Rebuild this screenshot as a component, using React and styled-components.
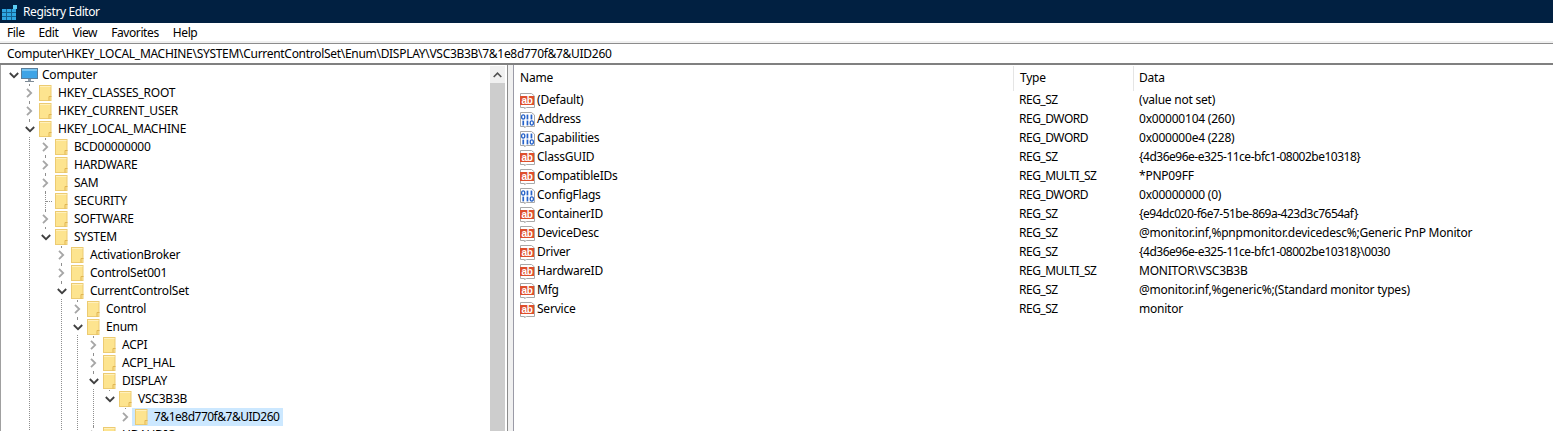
import styled, { createGlobalStyle } from "styled-components";

const ADDRESS =
  "Computer\\HKEY_LOCAL_MACHINE\\SYSTEM\\CurrentControlSet\\Enum\\DISPLAY\\VSC3B3B\\7&1e8d770f&7&UID260";

const MENUS = ["File", "Edit", "View", "Favorites", "Help"];

const leaf = (name) => ({ name });
const closed = (name) => ({ name, closed: true });

// more: the key has further siblings below the visible part of the tree
const TREE = {
  name: "Computer",
  computer: true,
  children: [
    closed("HKEY_CLASSES_ROOT"),
    closed("HKEY_CURRENT_USER"),
    {
      name: "HKEY_LOCAL_MACHINE",
      more: true,
      children: [
        closed("BCD00000000"),
        closed("HARDWARE"),
        closed("SAM"),
        leaf("SECURITY"),
        closed("SOFTWARE"),
        {
          name: "SYSTEM",
          children: [
            closed("ActivationBroker"),
            closed("ControlSet001"),
            {
              name: "CurrentControlSet",
              more: true,
              children: [
                closed("Control"),
                {
                  name: "Enum",
                  more: true,
                  children: [
                    closed("ACPI"),
                    closed("ACPI_HAL"),
                    {
                      name: "DISPLAY",
                      children: [
                        {
                          name: "VSC3B3B",
                          children: [
                            { name: "7&1e8d770f&7&UID260", closed: true, selected: true },
                          ],
                        },
                      ],
                    },
                    { name: "HDAUDIO", closed: true, more: true },
                  ],
                },
              ],
            },
          ],
        },
      ],
    },
  ],
};

const VALUES = [
  ["(Default)", "REG_SZ", "(value not set)"],
  ["Address", "REG_DWORD", "0x00000104 (260)"],
  ["Capabilities", "REG_DWORD", "0x000000e4 (228)"],
  ["ClassGUID", "REG_SZ", "{4d36e96e-e325-11ce-bfc1-08002be10318}"],
  ["CompatibleIDs", "REG_MULTI_SZ", "*PNP09FF"],
  ["ConfigFlags", "REG_DWORD", "0x00000000 (0)"],
  ["ContainerID", "REG_SZ", "{e94dc020-f6e7-51be-869a-423d3c7654af}"],
  ["DeviceDesc", "REG_SZ", "@monitor.inf,%pnpmonitor.devicedesc%;Generic PnP Monitor"],
  ["Driver", "REG_SZ", "{4d36e96e-e325-11ce-bfc1-08002be10318}\\0030"],
  ["HardwareID", "REG_MULTI_SZ", "MONITOR\\VSC3B3B"],
  ["Mfg", "REG_SZ", "@monitor.inf,%generic%;(Standard monitor types)"],
  ["Service", "REG_SZ", "monitor"],
];

function AppIcon() {
  const cells = [];
  for (let y = 0; y < 3; y++) {
    for (let x = 0; x < 3; x++) {
      cells.push(<rect key={`${x}-${y}`} x={2 + x * 5} y={7 + y * 4} width="4" height="3" />);
    }
  }
  return (
    <TitleIconSvg width="18" height="20" viewBox="0 0 18 20">
      <rect x="2" y="7" width="14" height="11" fill="#14608f" />
      <g fill="#2ea6e2">{cells}</g>
      <rect x="13" y="3" width="4" height="4" fill="#5ccdf2" />
    </TitleIconSvg>
  );
}

function ComputerIcon() {
  return (
    <svg width="18" height="15" viewBox="0 0 18 15">
      <rect x="0.5" y="0.5" width="16" height="10" fill="#3fa4e6" stroke="#5a7f9c" />
      <rect x="1" y="1" width="15" height="2" fill="#79c5f2" />
      <rect x="7" y="11" width="3" height="2" fill="#8f9ba6" />
      <rect x="4" y="13" width="9" height="1" fill="#7d8a96" />
    </svg>
  );
}

function FolderIcon() {
  return (
    <svg width="13" height="16" viewBox="0 0 13 16">
      <rect x="0.5" y="0.5" width="11.5" height="15" fill="#fde48f" stroke="#eccb72" />
      <rect x="1" y="1" width="10.5" height="1" fill="#fff0bd" />
      <path d="M10 15.5v-4h2.5" fill="none" stroke="#e0b552" />
    </svg>
  );
}

function Chevron({ open, leaf: isLeaf }) {
  if (isLeaf) return <ChevronSlot $leaf />;
  return (
    <ChevronSlot>
      {open ? (
        <svg width="10" height="7" viewBox="0 0 10 7">
          <path d="M0.8 1l4.2 4.2L9.2 1" fill="none" stroke="#404040" strokeWidth="1.8" />
        </svg>
      ) : (
        <svg width="7" height="10" viewBox="0 0 7 10">
          <path d="M1 0.8l4.2 4.2L1 9.2" fill="none" stroke="#a6a6a6" strokeWidth="1.8" />
        </svg>
      )}
    </ChevronSlot>
  );
}

function TreeNode({ node }) {
  const hasKids = !!node.children;
  return (
    <TreeItem $root={node.computer} $more={node.more}>
      <TreeRow>
        <Chevron open={hasKids} leaf={!hasKids && !node.closed} />
        <Entry $selected={node.selected} $computer={node.computer}>
          {node.computer ? <ComputerIcon /> : <FolderIcon />}
          <EntryLabel $tight={node.selected}>{node.name}</EntryLabel>
        </Entry>
      </TreeRow>
      {hasKids && (
        <Branch>
          {node.children.map((child) => (
            <TreeNode key={child.name} node={child} />
          ))}
        </Branch>
      )}
    </TreeItem>
  );
}

function ValueIcon({ type }) {
  if (type === "REG_DWORD") {
    return (
      <ValueSvg viewBox="0 0 17 16">
        <path d="M1.5 0.5h11l3 2.5v11.5h-8l-2 1v-1h-4z" fill="#fff" stroke="#a9a9a9" />
        <g fill="none" stroke="#2763c9" strokeWidth="1.3">
          <ellipse cx="4.2" cy="5" rx="1.6" ry="2.1" />
          <ellipse cx="12.8" cy="11" rx="1.6" ry="2.1" />
        </g>
        <g fill="#2763c9">
          <rect x="7.6" y="2.6" width="1.7" height="4.8" />
          <rect x="11.6" y="2.6" width="1.7" height="4.8" />
          <rect x="3.4" y="8.6" width="1.7" height="4.8" />
          <rect x="7.6" y="8.6" width="1.7" height="4.8" />
        </g>
      </ValueSvg>
    );
  }
  return (
    <ValueSvg viewBox="0 0 17 16">
      <path d="M1.5 0.5h11l3 2.5v11.5h-8l-2 1v-1h-4z" fill="#fff" stroke="#a9a9a9" />
      <rect x="1" y="3" width="14" height="9" fill="#de4f2c" />
      <text x="8" y="10.6" textAnchor="middle" fontFamily="Liberation Sans" fontWeight="700" fontSize="10" fill="#fff">
        ab
      </text>
    </ValueSvg>
  );
}

export default function App() {
  return (
    <Window>
      <GlobalStyle />
      <TitleBar>
        <AppIcon />
        <span>Registry Editor</span>
      </TitleBar>
      <MenuBar>
        {MENUS.map((m) => (
          <span key={m}>{m}</span>
        ))}
      </MenuBar>
      <AddressBar>{ADDRESS}</AddressBar>
      <Panes>
        <TreePane>
          <RootList>
            <TreeNode node={TREE} />
          </RootList>
        </TreePane>
        <ScrollBar>
          <ScrollButton>
            <svg width="9" height="6" viewBox="0 0 9 6">
              <path d="M0.7 5L4.5 1.2 8.3 5" fill="none" stroke="#505050" strokeWidth="1.6" />
            </svg>
          </ScrollButton>
        </ScrollBar>
        <Splitter />
        <ListPane>
          <ListHeader>
            <HeaderCell>Name</HeaderCell>
            <HeaderCell>Type</HeaderCell>
            <HeaderCell>Data</HeaderCell>
          </ListHeader>
          {VALUES.map(([name, type, data]) => (
            <ValueRow key={name}>
              <NameCell>
                <ValueIcon type={type} />
                <NameLabel>{name}</NameLabel>
              </NameCell>
              <TypeCell>{type}</TypeCell>
              <DataCell $tight={data.startsWith("{")}>{data}</DataCell>
            </ValueRow>
          ))}
        </ListPane>
      </Panes>
    </Window>
  );
}

const GlobalStyle = createGlobalStyle`
  html, body {
    margin: 0;
    background: #fff;
  }
  body {
    font-family: "Noto Sans", "Open Sans", sans-serif;
    font-size: 12px;
    letter-spacing: -0.22px;
    color: #000;
  }
`;

const Window = styled.div`
  height: 431px;
  display: flex;
  flex-direction: column;
  overflow: hidden;
`;

const TitleBar = styled.div`
  height: 23px;
  background: #012041;
  color: #fff;
  letter-spacing: -0.4px;
  display: flex;
  align-items: center;
  flex: none;
`;

const TitleIconSvg = styled.svg`
  margin-right: 5px;
  flex: none;
`;

const MenuBar = styled.div`
  height: 18px;
  flex: none;
  display: flex;
  align-items: center;
  gap: 14px;
  padding-left: 7px;
  letter-spacing: -0.4px;
  border-bottom: 2px solid #f0f0f0;
`;

const AddressBar = styled.div`
  height: 19px;
  line-height: 19px;
  flex: none;
  padding-left: 7px;
  letter-spacing: -0.295px;
  border-top: 1px solid #8c8c8c;
  border-bottom: 2px solid #808080;
  white-space: nowrap;
`;

const Panes = styled.div`
  flex: 1;
  min-height: 0;
  display: flex;
`;

const TreePane = styled.div`
  width: 486px;
  flex: none;
  padding: 1px 0 0 3px;
  border-left: 1px solid #a0a0a0;
  overflow: hidden;
`;

const RootList = styled.ul`
  list-style: none;
  margin: 0;
  padding: 0;
`;

const Branch = styled.ul`
  list-style: none;
  margin: 0 0 0 16px;
  padding: 0;
`;

const TreeItem = styled.li`
  position: relative;

  /* dotted guide line that joins the siblings */
  &::before {
    content: ${(p) => (p.$root ? "none" : '""')};
    position: absolute;
    left: 9px;
    top: 0;
    bottom: 0;
    border-left: 1px dotted #8f8f8f;
  }
  &:last-child::before {
    bottom: ${(p) => (p.$more ? "0" : "auto")};
    height: ${(p) => (p.$more ? "auto" : "9px")};
  }
`;

const TreeRow = styled.div`
  position: relative;
  height: 18px;
  display: flex;
  align-items: center;
  white-space: nowrap;
`;

const ChevronSlot = styled.div`
  position: relative;
  width: 16px;
  height: ${(p) => (p.$leaf ? "1px" : "14px")};
  flex: none;
  padding-left: 3px;
  box-sizing: border-box;
  display: flex;
  align-items: center;
  justify-content: center;
  background: ${(p) => (p.$leaf ? "none" : "#fff")};

  &::after {
    content: ${(p) => (p.$leaf ? '""' : "none")};
    position: absolute;
    left: 10px;
    right: 0;
    top: 0;
    border-top: 1px dotted #8f8f8f;
  }
`;

const Entry = styled.div`
  height: 18px;
  display: flex;
  align-items: center;
  gap: ${(p) => (p.$computer ? "3px" : "6px")};
  padding: 0 4px 0 3px;
  margin-left: ${(p) => (p.$computer ? "-2px" : "0")};
  background: ${(p) => (p.$selected ? "#cce8ff" : "transparent")};
  position: relative;
`;

const EntryLabel = styled.span`
  margin-bottom: 2px;
  letter-spacing: ${(p) => (p.$tight ? "-0.5px" : "inherit")};
`;

const ScrollBar = styled.div`
  width: 15px;
  flex: none;
  margin-top: 1px;
  background: #cdcdcd;
`;

const ScrollButton = styled.div`
  height: 17px;
  background: #f0f0f0;
  display: flex;
  align-items: center;
  justify-content: center;
`;

const Splitter = styled.div`
  width: 5px;
  flex: none;
  margin-left: 2px;
  background: #f0f0f0;
  border-left: 1px solid #8c8c8c;
  border-right: 1px solid #9a9aa6;
`;

const ListPane = styled.div`
  flex: 1;
  min-width: 0;
`;

const columns = "500px 120px 1fr";

const ListHeader = styled.div`
  display: grid;
  grid-template-columns: ${columns};
  height: 26px;
  padding-top: 1px;
  box-sizing: border-box;
`;

const HeaderCell = styled.div`
  padding-left: 6px;
  line-height: 24px;
  height: 25px;
  border-right: 1px solid #e5e5e5;
  &:last-child {
    border-right: none;
    padding-left: 5px;
  }
`;

const ValueRow = styled.div`
  display: grid;
  grid-template-columns: ${columns};
  height: 19px;
  align-items: center;
  white-space: nowrap;
`;

const NameCell = styled.div`
  display: flex;
  align-items: center;
  gap: 1px;
  padding-left: 5px;
`;

const NameLabel = styled.span`
  margin-bottom: 2px;
`;

const TypeCell = styled.span`
  padding-left: 5px;
  margin-bottom: 2px;
  letter-spacing: -0.5px;
`;

const DataCell = styled.span`
  padding-left: 5px;
  margin-bottom: 2px;
  letter-spacing: ${(p) => (p.$tight ? "-0.5px" : "inherit")};
`;

const ValueSvg = styled.svg`
  width: 17px;
  height: 16px;
  flex: none;
`;
